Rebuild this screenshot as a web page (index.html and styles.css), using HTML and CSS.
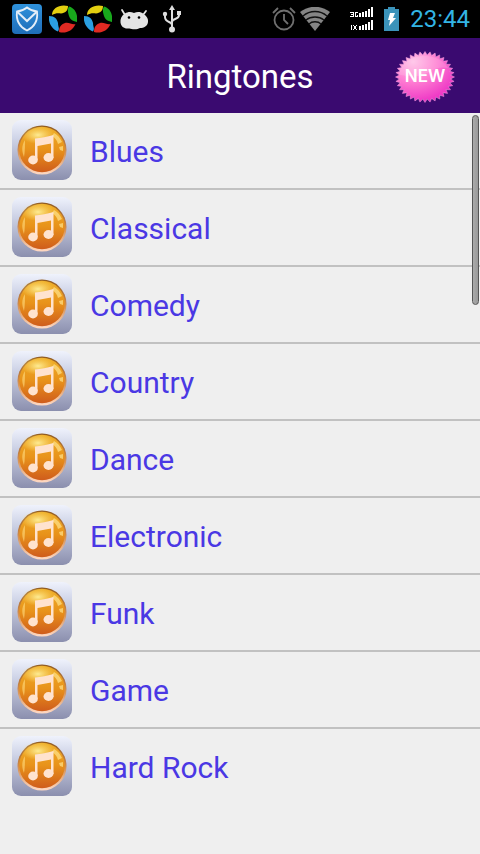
FILE: index.html
```
<!DOCTYPE html>
<html lang="en">
<head>
<meta charset="utf-8" />
<meta name="viewport" content="width=device-width, initial-scale=1" />
<title>Ringtones</title>
<link rel="stylesheet" href="styles.css">
</head>

<body>
<!-- shared icons -->
<svg class="defs" width="0" height="0" aria-hidden="true">
  <defs>
    <linearGradient id="tile" x1="0" y1="0" x2="0" y2="1">
      <stop offset="0" stop-color="#eff2fc"/>
      <stop offset="0.3" stop-color="#d0d5e8"/>
      <stop offset="1" stop-color="#8b8fae"/>
    </linearGradient>
    <linearGradient id="rim" x1="0" y1="0" x2="0" y2="1">
      <stop offset="0" stop-color="#8f5a20"/>
      <stop offset="0.5" stop-color="#cf8a4c"/>
      <stop offset="1" stop-color="#ffd9c4"/>
    </linearGradient>
    <linearGradient id="ball" x1="0" y1="0" x2="0" y2="1">
      <stop offset="0" stop-color="#efb02a"/>
      <stop offset="0.5" stop-color="#e8921a"/>
      <stop offset="1" stop-color="#cf5c1c"/>
    </linearGradient>
    <radialGradient id="shine">
      <stop offset="0" stop-color="#fff3a0" stop-opacity="0.9"/>
      <stop offset="1" stop-color="#ffe070" stop-opacity="0"/>
    </radialGradient>
    <radialGradient id="pink" cx="0.3" cy="0.2" r="0.85">
      <stop offset="0" stop-color="#ffc0e6"/>
      <stop offset="0.45" stop-color="#ff7fd2"/>
      <stop offset="1" stop-color="#ec2fc4"/>
    </radialGradient>
    <linearGradient id="blue" x1="0" y1="0" x2="0" y2="1">
      <stop offset="0" stop-color="#2f92dc"/>
      <stop offset="1" stop-color="#1f6db8"/>
    </linearGradient>
    <symbol id="note" viewBox="0 0 60 60">
      <rect width="60" height="60" rx="9" fill="url(#tile)"/>
      <circle cx="30" cy="30" r="24.500" fill="url(#rim)"/>
      <circle cx="30" cy="29.500" r="22.800" fill="url(#ball)"/>
      <ellipse cx="26" cy="15" rx="17" ry="9" fill="url(#shine)"/>
      <path d="M13 20c-4 6-3 12-1 17 1-6 1-11 1-17z" fill="#ffdc80" opacity="0.600"/>
      <path d="M42 13c4 2 6 5 8 9l-4 2c-1-4-3-6-6-8zM47 27l4-1v5l-3-1z" fill="#ffe28a" opacity="0.700"/>
      <g fill="#ffe3cf">
        <path d="M23 18.500c6-.5 12-1.500 18.500-3.500v23H39V23.500L25.500 26v14H23z"/>
        <ellipse cx="21" cy="40" rx="4.800" ry="4.400"/>
        <ellipse cx="36.500" cy="37.500" rx="5" ry="4.400"/>
      </g>
    </symbol>
    <symbol id="swirl" viewBox="0 0 28 28">
      <path d="M3 10C3 3 11-1 19 1c0 5-3 7-7 7.500-4-.5-6 0-9 1.500z" fill="#e3cf10"/>
      <path d="M20 1.500c7 2 9 9 8 15.500-5-1-7-3-8-6-1-4-2-6 0-9.500z" fill="#18a81c"/>
      <path d="M26.500 19c-3 7-10 10-16.500 8 0-6 3-8 6-9 4-1 7 2 10.500 1z" fill="#e02a22"/>
      <path d="M9 26.500C3 24-1 18 0 11c6 0 8 3 9 7 0 4 2 5 0 8.500z" fill="#2b9fe0"/>
    </symbol>
  </defs>
</svg>

<div class="statusbar">
  <div class="notices">
    <svg width="30" height="30" viewBox="0 0 30 30">
      <rect width="30" height="30" rx="4" fill="url(#blue)"/>
      <path d="M15 3.500c3 2.500 6 3.500 10 4 1 8-2 15-10 19C7 22.500 4 15.500 5 7.500c4-.5 7-1.500 10-4z" fill="none" stroke="#e4eef8" stroke-width="1.800"/>
      <path d="M5.500 8l9.500 9 9.500-9" fill="none" stroke="#e4eef8" stroke-width="2"/>
    </svg>
    <svg width="28" height="28"><use href="#swirl"/></svg>
    <svg width="28" height="28"><use href="#swirl"/></svg>
    <svg width="30" height="22" viewBox="0 0 30 22">
      <path d="M3 2l3 5M27 3l-3 4" stroke="#e4e4e4" stroke-width="1.800" stroke-linecap="round"/>
      <path d="M6 5.500C9 3.500 12 3.500 15 5c3-1.500 7-1.500 9.500 1 3 2 5 4.500 4.500 8-.5 4-4 6-8 6-2 1-4 1.500-7 1.200-2-.2-3-.7-5-.7-4 .3-7-2-7.500-6C1 11 2.500 7.500 6 5.500z" fill="#e4e4e4"/>
      <circle cx="10" cy="9.500" r="1.300"/><circle cx="20" cy="9.500" r="1.300"/>
    </svg>
    <svg class="usb" width="20" height="28" viewBox="0 0 20 28">
      <path d="M10 3v22M10 20c0-4-7-2-7-8V9M10 17c0-4 7-2 7-7V8" fill="none" stroke="#dedede" stroke-width="2"/>
      <path d="M10 0l3 5H7z" fill="#dedede"/>
      <circle cx="10" cy="24.500" r="3" fill="#dedede"/><circle cx="3" cy="9" r="2.200" fill="#dedede"/>
      <rect x="15" y="6" width="4" height="4" fill="#dedede"/>
    </svg>
  </div>
  <div class="signals">
    <svg width="24" height="24" viewBox="0 0 24 24" fill="none" stroke="#707070" stroke-width="1.800">
      <circle cx="12" cy="13" r="9.500"/>
      <path d="M12 7v6l4 4M1 6l5-5M18 1l5 5"/>
    </svg>
    <svg class="wifi" width="30" height="24" viewBox="0 0 30 24">
      <path d="M0 5C9-2 21-2 30 5L15 24z" fill="#858585"/>
      <path d="M3 9c7-6 17-6 24 0M6 13c5-4 13-4 18 0M9 17c3-3 9-3 12 0" fill="none" stroke="#111" stroke-width="1.300"/>
    </svg>
    <svg class="bars" width="24" height="24" viewBox="0 0 24 24" shape-rendering="crispEdges">
      <path d="M9 6h2v4H9zM12 5h2v5h-2zM15 4h2v6h-2zM18 2h2v8h-2zM21 0h2v10h-2z" fill="#fff"/>
      <path d="M9 19h2v4H9zM12 18h2v5h-2zM15 17h2v6h-2zM18 15h2v8h-2zM21 13h2v10h-2z" fill="#fff"/>
      <path d="M0 5.500h3.500v4H0M1 7.500h2.500M8 5.500H5.500v4h2v-2M1.500 18v5M3 18l4 5M7 18l-4 5" fill="none" stroke="#fff"/>
    </svg>
    <svg width="16" height="24" viewBox="0 0 16 24">
      <path d="M4 0h7v2h4v22H0V2h4z" fill="#3b93ba"/>
      <path d="M6 6h5l-2 5h3L5 19l1-6H4z" fill="#fff"/>
    </svg>
    <span class="clock">23:44</span>
  </div>
</div>

<header class="titlebar">
  <h1>Ringtones</h1>
  <a class="new" href="#new" aria-label="New ringtones">
    <svg width="60" height="52" viewBox="0 0 60 52">
      <polygon id="burst" fill="url(#pink)" stroke="#f7a5e2" stroke-width="0.500"/>
      <path d="M4 24C5 12 17 5 30 5c11 0 19 5 23 12-14-3-20 7-30 8-8 1-13-1-19-1z" fill="#fff" opacity="0.150"/>
      <text x="30" y="31" class="newtext">NEW</text>
    </svg>
  </a>
</header>

<main class="list">
  <ul id="genres"></ul>
  <div class="thumb"></div>
</main>

<script>
var genres = ["Blues", "Classical", "Comedy", "Country", "Dance", "Electronic", "Funk", "Game", "Hard Rock"];

var s = "";
for (var i = 0; i < genres.length; i++) {
  s += "<li><a href='#'><svg width='60' height='60'><use href='#note'/></svg>";
  s += "<span>" + genres[i] + "</span></a></li>";
}
document.getElementById("genres").innerHTML = s;

// badge outline: 36 teeth, every other point pulled in
var pts = "";
for (i = 0; i < 72; i++) {
  var a = Math.PI * i / 36;
  var r = i % 2 ? 0.87 : 1;
  pts += (30 + 29.5 * r * Math.cos(a)).toFixed(1) + "," + (26 + 25.5 * r * Math.sin(a)).toFixed(1) + " ";
}
document.getElementById("burst").setAttribute("points", pts);
</script>
</body>
</html>
```
FILE: styles.css
```
* {
  box-sizing: border-box;
}
body {
  margin: 0;
  min-height: 100vh;
  background: #efefef;
  font-family: Roboto, "Noto Sans", sans-serif;
}
svg {
  display: block;
  flex: none;
}
.defs {
  position: absolute;
}
.statusbar {
  display: flex;
  justify-content: space-between;
  align-items: center;
  height: 38px;
  padding: 0 10px 0 12px;
  background: #000;
}
.notices {
  display: flex;
  align-items: center;
  gap: 7px;
}
.usb {
  margin-left: 6px;
}
.signals {
  display: flex;
  align-items: center;
  gap: 10px;
}
.wifi {
  margin-left: -6px;
}
.bars {
  margin-left: 10px;
}
.clock {
  color: #33b5e5;
  font-size: 24px;
  line-height: 40px;
}
.titlebar {
  display: grid;
  grid-template-columns: 1fr auto 1fr;
  align-items: center;
  height: 75px;
  background: #3a0a70;
}
.titlebar h1 {
  grid-column: 2;
  margin: 0;
  color: #fff;
  font-size: 33px;
  font-weight: 400;
  line-height: 77px;
}
.new {
  justify-self: end;
  margin-right: 25px;
}
.newtext {
  fill: #fff;
  font: 600 17px Inter, sans-serif;
  text-anchor: middle;
}
.list {
  position: relative;
}
.list ul {
  margin: 0;
  padding: 0;
  list-style: none;
}
.list li {
  border-bottom: 2px solid #c1c1c1;
}
.list li:last-child {
  border-bottom: none;
}
.list a {
  display: flex;
  align-items: flex-start;
  gap: 18px;
  height: 75px;
  padding: 7px 12px 0;
  color: #4a38e4;
  font-size: 30px;
  line-height: 64px;
  text-decoration: none;
}
/* scroll position, drawn over the rows */
.thumb {
  position: absolute;
  top: 2px;
  right: 1px;
  width: 7px;
  height: 190px;
  border: 1px solid #555;
  border-radius: 4px;
  background: linear-gradient(to right, #aaa, #999);
}
```
